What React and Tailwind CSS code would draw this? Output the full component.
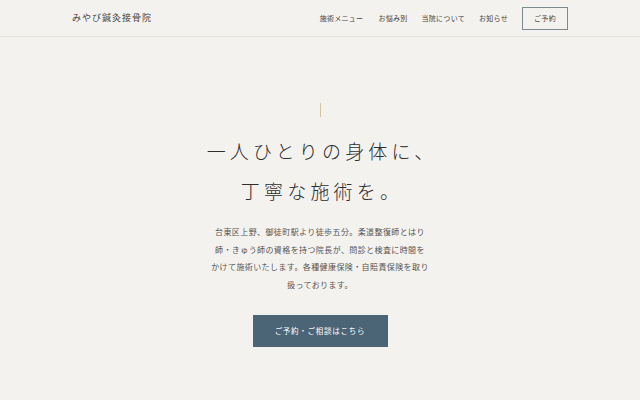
export default function App() {
  const sans = { fontFamily: '"Noto Sans CJK JP", "Noto Sans", sans-serif' };
  return (
    <div className="w-[640px] h-[400px] bg-[#f4f2ee] text-[#3a3a3a] overflow-hidden flex flex-col" style={sans}>
      <header className="h-[37px] shrink-0 border-b border-[#e6e3dd] flex items-center justify-between pl-[72px] pr-[72px]">
        <div className="text-[9px] tracking-[0.11em] text-[#444]">みやび鍼灸接骨院</div>
        <nav className="flex items-center">
          <a className="text-[7px] tracking-[0.04em] text-[#444] mr-[15px]">施術メニュー</a>
          <a className="text-[7px] tracking-[0.04em] text-[#444] mr-[14px]">お悩み別</a>
          <a className="text-[7px] tracking-[0.04em] text-[#444] mr-[14px]">当院について</a>
          <a className="text-[7px] tracking-[0.04em] text-[#444] mr-[14px]">お知らせ</a>
          <a className="w-[46px] h-[23px] border border-[#7d8a90] flex items-center justify-center text-[7px] tracking-[0.04em] text-[#444]">ご予約</a>
        </nav>
      </header>
      <main className="flex-1 flex flex-col items-center">
        <div className="mt-[66px] w-px h-[14px] bg-[#cfc3a2]"></div>
        <h1 className="mt-[14px] text-center text-[19px] leading-[40px] tracking-[0.22em] font-light text-[#2e2e2e] pl-[4px]">
          一人ひとりの身体に、<br />丁寧な施術を。
        </h1>
        <p className="mt-[12px] text-center text-[8px] leading-[17.5px] tracking-[0.05em] text-[#555]">
          台東区上野、御徒町駅より徒歩五分。柔道整復師とはり<br />
          師・きゅう師の資格を持つ院長が、問診と検査に時間を<br />
          かけて施術いたします。各種健康保険・自賠責保険を取り<br />
          扱っております。
        </p>
        <button className="mt-[22px] w-[135px] h-[32px] bg-[#4b6476] text-white text-[7.5px] tracking-[0.1em] flex items-center justify-center">
          ご予約・ご相談はこちら
        </button>
      </main>
    </div>
  );
}
